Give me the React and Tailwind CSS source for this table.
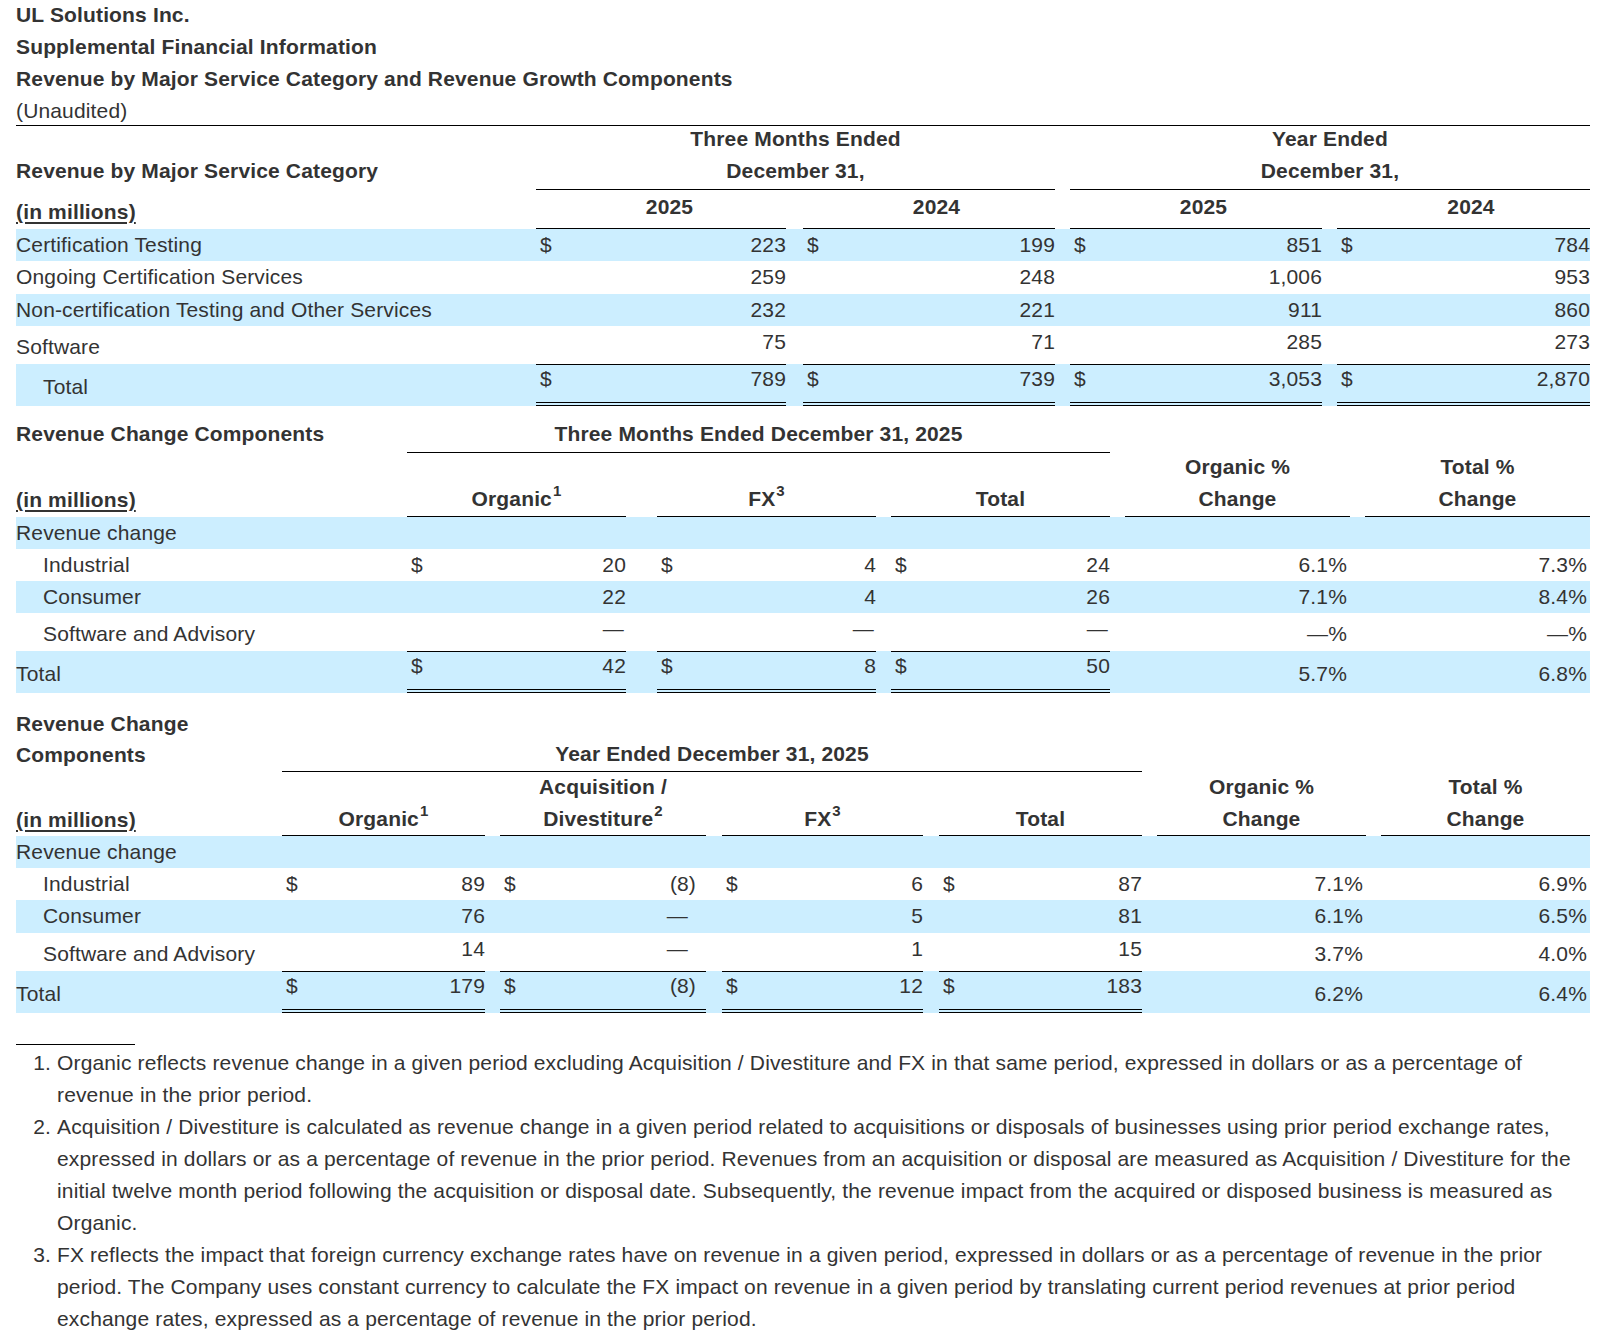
import React from "react";

const BLUE = "bg-[#cceeff]";

const T1 = {
  label: "w-[520px]",
  cols: [
    { w: "w-[250px]", gap: "w-[17px]" },
    { w: "w-[252px]", gap: "w-[15px]" },
    { w: "w-[252px]", gap: "w-[15px]" },
    { w: "w-[253px]", gap: null },
  ],
};

const T2 = {
  label: "w-[391px]",
  cols: [
    { w: "w-[219px]", gap: "w-[31px]" },
    { w: "w-[219px]", gap: "w-[15px]" },
    { w: "w-[219px]", gap: "w-[15px]" },
    { w: "w-[225px]", gap: "w-[15px]", pct: true },
    { w: "w-[225px]", gap: null, pct: true },
  ],
};

const T3 = {
  label: "w-[266px]",
  cols: [
    { w: "w-[203px]", gap: "w-[15px]" },
    { w: "w-[206px]", gap: "w-[16px]" },
    { w: "w-[201px]", gap: "w-[16px]" },
    { w: "w-[203px]", gap: "w-[15px]" },
    { w: "w-[209px]", gap: "w-[15px]", pct: true },
    { w: "w-[209px]", gap: null, pct: true },
  ],
};

function ValueCell({ col, cell, kind }) {
  const c = cell || {};
  if (col.pct) {
    const align =
      kind === "normal"
        ? "items-start"
        : kind === "sub"
        ? "items-end pb-[1px]"
        : "items-end pb-[3px]";
    return (
      <div className={`${col.w} flex justify-end pr-[3px] ${align}`}>
        <span className="leading-[32px] whitespace-nowrap">{c.v}</span>
      </div>
    );
  }
  const border =
    kind === "total" ? "border-t border-b-4 border-double border-black" : "";
  const lead = kind === "total" ? "leading-[28px]" : "leading-[32px]";
  return (
    <div className={`${col.w} flex justify-between items-start ${border}`}>
      <span className={`${lead} pl-[4px]`}>{c.d ? "$" : ""}</span>
      <span className={`${lead} whitespace-nowrap ${c.pr || ""}`}>{c.v}</span>
    </div>
  );
}

function DataRow({ spec, label, indent, cells = [], kind = "normal", blue, h }) {
  const labelAlign =
    kind === "normal"
      ? "items-start"
      : kind === "sub"
      ? "items-end pb-[1px]"
      : "items-end pb-[3px]";
  return (
    <div className={`flex ${h} ${blue ? BLUE : ""}`}>
      <div
        className={`${spec.label} flex ${labelAlign} ${indent ? "pl-[27px]" : ""}`}
      >
        <span className="leading-[32px] whitespace-nowrap">{label}</span>
      </div>
      {spec.cols.map((col, i) => (
        <React.Fragment key={i}>
          <ValueCell col={col} cell={cells[i]} kind={kind} />
          {col.gap && <div className={col.gap} />}
        </React.Fragment>
      ))}
    </div>
  );
}

function Sup({ children }) {
  return <sup className="text-[15px] -top-[10px] ml-[1px]">{children}</sup>;
}

function InMillions() {
  return (
    <span className="underline decoration-[1.5px] underline-offset-[3px]">
      (in millions)
    </span>
  );
}

function Table1() {
  return (
    <div>
      <div className="flex h-[29px] items-start font-bold leading-[26px]">
        <div className="w-[520px]" />
        <div className="w-[519px] text-center">Three Months Ended</div>
        <div className="w-[15px]" />
        <div className="w-[520px] text-center">Year Ended</div>
      </div>
      <div className="flex h-[35px] font-bold leading-[32px]">
        <div className="w-[520px]">Revenue by Major Service Category</div>
        <div className="w-[519px] border-b border-black text-center">
          December 31,
        </div>
        <div className="w-[15px]" />
        <div className="w-[520px] border-b border-black text-center">
          December 31,
        </div>
      </div>
      <div className="flex h-[39px] font-bold leading-[32px]">
        <div className="w-[520px] flex items-end pb-[1px]">
          <InMillions />
        </div>
        <div className="w-[250px] border-b border-black pt-[1px] pl-[17px] text-center">
          2025
        </div>
        <div className="w-[17px]" />
        <div className="w-[252px] border-b border-black pt-[1px] pl-[15px] text-center">
          2024
        </div>
        <div className="w-[15px]" />
        <div className="w-[252px] border-b border-black pt-[1px] pl-[15px] text-center">
          2025
        </div>
        <div className="w-[15px]" />
        <div className="w-[253px] border-b border-black pt-[1px] pl-[15px] text-center">
          2024
        </div>
      </div>
      <DataRow
        spec={T1}
        h="h-[32px]"
        blue
        label="Certification Testing"
        cells={[
          { d: true, v: "223" },
          { d: true, v: "199" },
          { d: true, v: "851" },
          { d: true, v: "784" },
        ]}
      />
      <DataRow
        spec={T1}
        h="h-[33px]"
        label="Ongoing Certification Services"
        cells={[{ v: "259" }, { v: "248" }, { v: "1,006" }, { v: "953" }]}
      />
      <DataRow
        spec={T1}
        h="h-[32px]"
        blue
        label="Non-certification Testing and Other Services"
        cells={[{ v: "232" }, { v: "221" }, { v: "911" }, { v: "860" }]}
      />
      <DataRow
        spec={T1}
        h="h-[38px]"
        kind="sub"
        label="Software"
        cells={[{ v: "75" }, { v: "71" }, { v: "285" }, { v: "273" }]}
      />
      <DataRow
        spec={T1}
        h="h-[42px]"
        kind="total"
        blue
        indent
        label="Total"
        cells={[
          { d: true, v: "789" },
          { d: true, v: "739" },
          { d: true, v: "3,053" },
          { d: true, v: "2,870" },
        ]}
      />
    </div>
  );
}

function Table2() {
  return (
    <div>
      <div className="flex h-[47px] font-bold leading-[32px]">
        <div className="w-[391px] flex items-end pb-[3px]">
          Revenue Change Components
        </div>
        <div className="w-[703px] flex items-end justify-center border-b border-black pb-[2px]">
          Three Months Ended December 31, 2025
        </div>
      </div>
      <div className="flex h-[64px] font-bold leading-[32px]">
        <div className="w-[391px] flex items-end pb-[1px]">
          <InMillions />
        </div>
        <div className="w-[219px] flex items-end justify-center border-b border-black pb-[1px]">
          <span>
            Organic<Sup>1</Sup>
          </span>
        </div>
        <div className="w-[31px]" />
        <div className="w-[219px] flex items-end justify-center border-b border-black pb-[1px]">
          <span>
            FX<Sup>3</Sup>
          </span>
        </div>
        <div className="w-[15px]" />
        <div className="w-[219px] flex items-end justify-center border-b border-black pb-[1px]">
          Total
        </div>
        <div className="w-[15px]" />
        <div className="w-[225px] flex items-end justify-center border-b border-black pb-[1px] text-center">
          <span>
            Organic %
            <br />
            Change
          </span>
        </div>
        <div className="w-[15px]" />
        <div className="w-[225px] flex items-end justify-center border-b border-black pb-[1px] text-center">
          <span>
            Total %
            <br />
            Change
          </span>
        </div>
      </div>
      <DataRow spec={T2} h="h-[32px]" blue label="Revenue change" />
      <DataRow
        spec={T2}
        h="h-[32px]"
        indent
        label="Industrial"
        cells={[
          { d: true, v: "20" },
          { d: true, v: "4" },
          { d: true, v: "24" },
          { v: "6.1%" },
          { v: "7.3%" },
        ]}
      />
      <DataRow
        spec={T2}
        h="h-[32px]"
        blue
        indent
        label="Consumer"
        cells={[
          { v: "22" },
          { v: "4" },
          { v: "26" },
          { v: "7.1%" },
          { v: "8.4%" },
        ]}
      />
      <DataRow
        spec={T2}
        h="h-[38px]"
        kind="sub"
        indent
        label="Software and Advisory"
        cells={[
          { v: "—", pr: "pr-[2px]" },
          { v: "—", pr: "pr-[2px]" },
          { v: "—", pr: "pr-[2px]" },
          { v: "—%" },
          { v: "—%" },
        ]}
      />
      <DataRow
        spec={T2}
        h="h-[42px]"
        kind="total"
        blue
        label="Total"
        cells={[
          { d: true, v: "42" },
          { d: true, v: "8" },
          { d: true, v: "50" },
          { v: "5.7%" },
          { v: "6.8%" },
        ]}
      />
    </div>
  );
}

function Table3() {
  return (
    <div>
      <div className="flex h-[79px] font-bold">
        <div className="w-[266px] flex items-end pb-[2px] leading-[31px]">
          <span>
            Revenue Change
            <br />
            Components
          </span>
        </div>
        <div className="w-[860px] flex items-end justify-center border-b border-black pb-[1px] leading-[32px]">
          Year Ended December 31, 2025
        </div>
      </div>
      <div className="flex h-[64px] font-bold leading-[32px]">
        <div className="w-[266px] flex items-end">
          <InMillions />
        </div>
        <div className="w-[203px] flex items-end justify-center border-b border-black">
          <span>
            Organic<Sup>1</Sup>
          </span>
        </div>
        <div className="w-[15px]" />
        <div className="w-[206px] flex items-end justify-center border-b border-black text-center">
          <span>
            Acquisition /
            <br />
            Divestiture<Sup>2</Sup>
          </span>
        </div>
        <div className="w-[16px]" />
        <div className="w-[201px] flex items-end justify-center border-b border-black">
          <span>
            FX<Sup>3</Sup>
          </span>
        </div>
        <div className="w-[16px]" />
        <div className="w-[203px] flex items-end justify-center border-b border-black">
          Total
        </div>
        <div className="w-[15px]" />
        <div className="w-[209px] flex items-end justify-center border-b border-black text-center">
          <span>
            Organic %
            <br />
            Change
          </span>
        </div>
        <div className="w-[15px]" />
        <div className="w-[209px] flex items-end justify-center border-b border-black text-center">
          <span>
            Total %
            <br />
            Change
          </span>
        </div>
      </div>
      <DataRow spec={T3} h="h-[32px]" blue label="Revenue change" />
      <DataRow
        spec={T3}
        h="h-[32px]"
        indent
        label="Industrial"
        cells={[
          { d: true, v: "89" },
          { d: true, v: "(8)", pr: "pr-[10px]" },
          { d: true, v: "6" },
          { d: true, v: "87" },
          { v: "7.1%" },
          { v: "6.9%" },
        ]}
      />
      <DataRow
        spec={T3}
        h="h-[33px]"
        blue
        indent
        label="Consumer"
        cells={[
          { v: "76" },
          { v: "—", pr: "pr-[18px]" },
          { v: "5" },
          { v: "81" },
          { v: "6.1%" },
          { v: "6.5%" },
        ]}
      />
      <DataRow
        spec={T3}
        h="h-[38px]"
        kind="sub"
        indent
        label="Software and Advisory"
        cells={[
          { v: "14" },
          { v: "—", pr: "pr-[18px]" },
          { v: "1" },
          { v: "15" },
          { v: "3.7%" },
          { v: "4.0%" },
        ]}
      />
      <DataRow
        spec={T3}
        h="h-[42px]"
        kind="total"
        blue
        label="Total"
        cells={[
          { d: true, v: "179" },
          { d: true, v: "(8)", pr: "pr-[10px]" },
          { d: true, v: "12" },
          { d: true, v: "183" },
          { v: "6.2%" },
          { v: "6.4%" },
        ]}
      />
    </div>
  );
}

function Lines({ lines }) {
  return lines.map((l, i) => (
    <span key={i} className="block whitespace-nowrap">
      {l}
    </span>
  ));
}

function Footnotes() {
  return (
    <div className="mt-[31px]">
      <div className="h-px w-[119px] bg-black" />
      <ol className="mt-[2px] list-decimal pl-[41px] leading-[32px]">
        <li>
          <Lines
            lines={[
              "Organic reflects revenue change in a given period excluding Acquisition / Divestiture and FX in that same period, expressed in dollars or as a percentage of",
              "revenue in the prior period.",
            ]}
          />
        </li>
        <li>
          <Lines
            lines={[
              "Acquisition / Divestiture is calculated as revenue change in a given period related to acquisitions or disposals of businesses using prior period exchange rates,",
              "expressed in dollars or as a percentage of revenue in the prior period. Revenues from an acquisition or disposal are measured as Acquisition / Divestiture for the",
              "initial twelve month period following the acquisition or disposal date. Subsequently, the revenue impact from the acquired or disposed business is measured as",
              "Organic.",
            ]}
          />
        </li>
        <li>
          <Lines
            lines={[
              "FX reflects the impact that foreign currency exchange rates have on revenue in a given period, expressed in dollars or as a percentage of revenue in the prior",
              "period. The Company uses constant currency to calculate the FX impact on revenue in a given period by translating current period revenues at prior period",
              "exchange rates, expressed as a percentage of revenue in the prior period.",
            ]}
          />
        </li>
      </ol>
    </div>
  );
}

export default function App() {
  return (
    <div className="w-[1606px] min-h-[1338px] bg-white px-4 text-[21px] tracking-[0.15px] text-[#333333] font-['Liberation_Sans',Arial,sans-serif]">
      <div className="h-[127px] border-b border-black leading-[32px]">
        <div className="-mt-px font-bold">UL Solutions Inc.</div>
        <div className="font-bold">Supplemental Financial Information</div>
        <div className="font-bold">
          Revenue by Major Service Category and Revenue Growth Components
        </div>
        <div>(Unaudited)</div>
      </div>
      <Table1 />
      <Table2 />
      <Table3 />
      <Footnotes />
    </div>
  );
}
